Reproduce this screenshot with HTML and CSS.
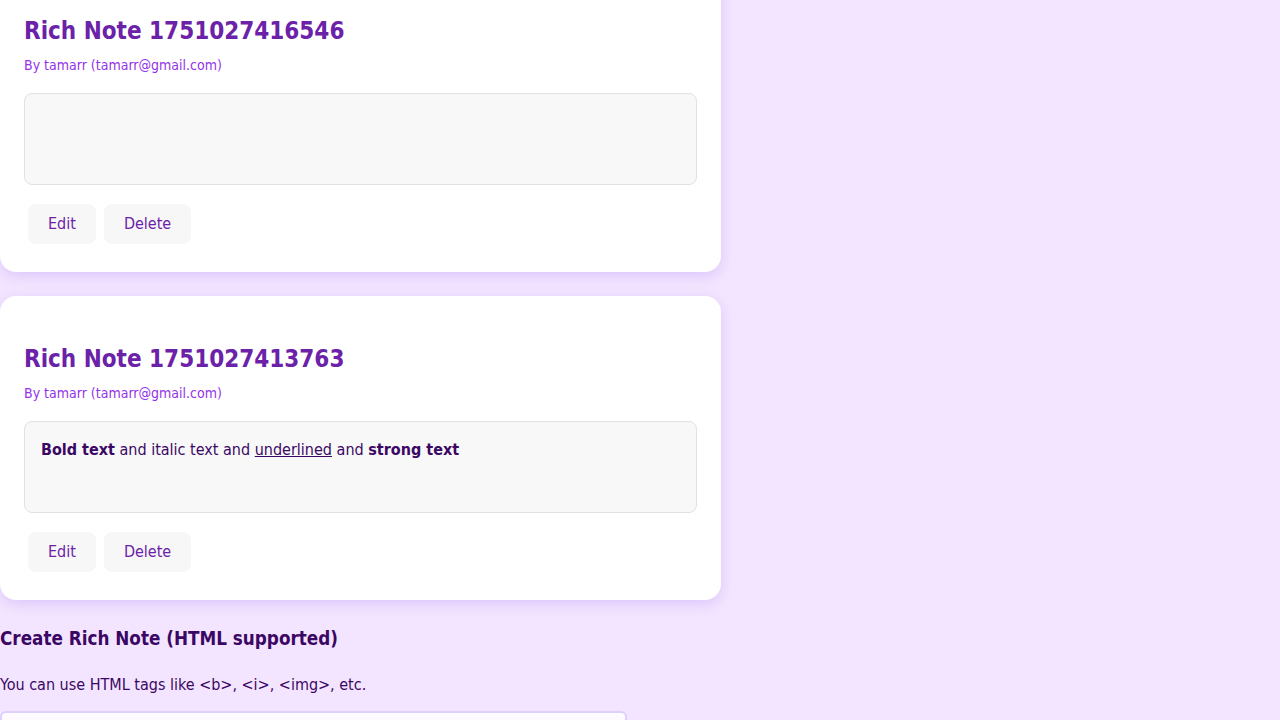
FILE: index.html
```html
<!DOCTYPE html>
<html lang="en">
<head>
<meta charset="utf-8">
<title>Rich Notes</title>
<link rel="stylesheet" href="styles.css">
</head>
<body>
<main class="page">
  <section class="notes">
    <article class="note-card">
      <h2 class="note-title">Rich Note 1751027416546</h2>
      <p class="note-author">By tamarr (tamarr@gmail.com)</p>
      <div class="note-content"></div>
      <div class="note-actions">
        <button class="btn">Edit</button>
        <button class="btn">Delete</button>
      </div>
    </article>
    <article class="note-card">
      <h2 class="note-title">Rich Note 1751027413763</h2>
      <p class="note-author">By tamarr (tamarr@gmail.com)</p>
      <div class="note-content"><b>Bold text</b> and italic text and <u>underlined</u> and <strong>strong text</strong></div>
      <div class="note-actions">
        <button class="btn">Edit</button>
        <button class="btn">Delete</button>
      </div>
    </article>
  </section>
  <section class="create">
    <h3 class="create-title">Create Rich Note (HTML supported)</h3>
    <p class="create-hint">You can use HTML tags like &lt;b&gt;, &lt;i&gt;, &lt;img&gt;, etc.</p>
    <input class="create-input" type="text">
  </section>
</main>
</body>
</html>
```
FILE: styles.css
```css
html, body {
  margin: 0;
  padding: 0;
  background: #f3e5ff;
}
body {
  font-family: Tahoma, "DejaVu Sans Condensed", "DejaVu Sans", sans-serif;
  color: #3b0764;
  line-height: 1.6;
  font-size: 16px;
  overflow: hidden;
}
.page {
  margin-top: -32px;
}
.notes {
  display: flex;
  flex-direction: column;
  gap: 24px;
}
.note-card {
  width: 721px;
  box-sizing: border-box;
  background: #ffffff;
  border-radius: 16px;
  padding: 24px;
  box-shadow: 0 4px 14px rgba(170, 120, 240, 0.28);
}
.note-title {
  font-size: 24px;
  font-weight: bold;
  color: #6b21a8;
  margin: 20px 0 4px;
}
.note-author {
  font-size: 14px;
  color: #9333ea;
  margin: 0 0 16px;
}
.note-content {
  background: #f8f8f8;
  border: 1px solid #e2e2e2;
  border-radius: 8px;
  padding: 15px 16px 16px;
  min-height: 59px;
  margin-bottom: 15px;
}
.note-actions {
  display: flex;
}
.btn {
  font-family: inherit;
  font-size: 16px;
  line-height: 24px;
  color: #6b21a8;
  background: #f7f7f7;
  border: none;
  border-radius: 8px;
  padding: 8px 20px;
  margin: 4px;
  cursor: pointer;
}
.create-title {
  font-size: 18.72px;
  font-weight: bold;
  margin: 24px 0 18px;
}
.create-hint {
  margin: 0 0 14px;
}
.create-input {
  display: block;
  width: 627px;
  height: 40px;
  box-sizing: border-box;
  border: 2px solid #ddd0fa;
  border-radius: 6px;
  background: #fdfbff;
}
```
